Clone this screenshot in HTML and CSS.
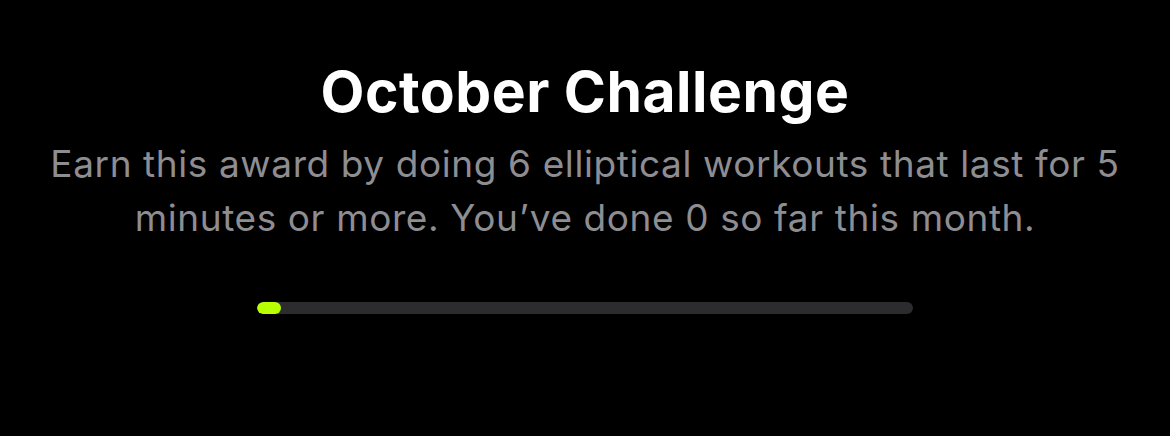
FILE: index.html
```html
<!DOCTYPE html>
<html>
<head>
<meta charset="utf-8">
<link rel="stylesheet" href="styles.css">
</head>
<body>
<main class="award">
  <h1 class="title">October Challenge</h1>
  <p class="desc">Earn this award by doing 6 elliptical workouts that last for 5 minutes or more. You’ve done 0 so far this month.</p>
  <div class="track"><div class="fill" style="width: 24px"></div></div>
</main>
</body>
</html>
```
FILE: styles.css
```css
html, body {
  margin: 0;
  padding: 0;
  background: #000;
}
.award {
  width: 1170px;
  height: 436px;
  display: flex;
  flex-direction: column;
  align-items: center;
  font-family: Inter, "Noto Sans", sans-serif;
}
.title {
  margin: 61px 0 0;
  font-size: 57px;
  font-weight: 700;
  color: #fff;
  line-height: 62px;
  letter-spacing: 0.5px;
}
.desc {
  margin: 14px 0 0;
  width: 1100px;
  text-align: center;
  font-size: 37px;
  line-height: 54px;
  letter-spacing: 0.6px;
  color: #8d8d92;
}
.track {
  margin-top: 57px;
  width: 656px;
  height: 12px;
  border-radius: 6px;
  background: #2c2c2e;
  overflow: hidden;
}
.fill {
  height: 100%;
  border-radius: 6px;
  background: #b8ff00;
}
```
